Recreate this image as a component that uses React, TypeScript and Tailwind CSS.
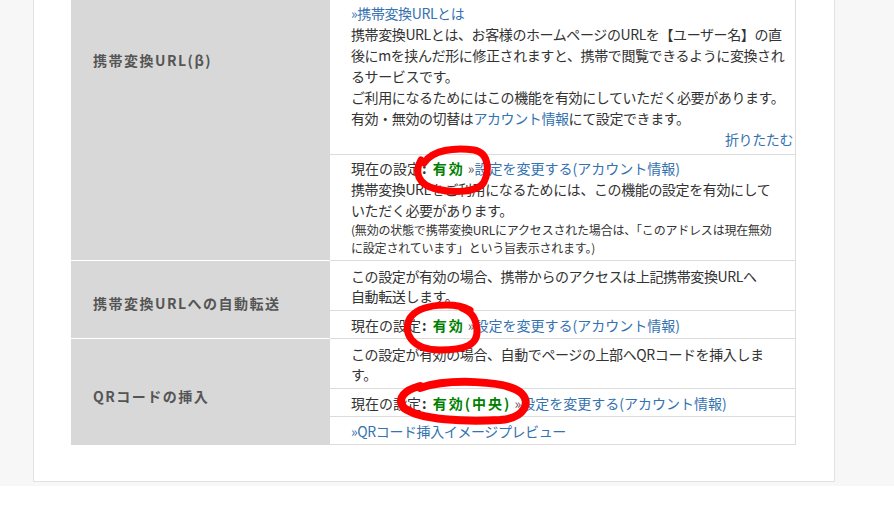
const link = 'text-[#3572b0]';

function Status({ value, lh }: { value: string; lh: string }) {
  return (
    <div className={`${lh} tracking-normal`}>
      現在の設定<b className="pl-[1px] font-bold">:</b>{' '}
      <b className="ml-[3px] font-bold tracking-[2px] text-[#008000]">{value}</b>{' '}
      <span className="text-[#555]">»</span>
      <a className={link}>設定を変更する(アカウント情報)</a>
    </div>
  );
}

function Header({ label, className }: { label: string; className: string }) {
  return (
    <div
      className={`w-[259px] shrink-0 bg-[#d8d8d8] pl-[22px] text-[14px] font-bold leading-[21px] tracking-[1.5px] text-[#555] ${className}`}
    >
      {label}
    </div>
  );
}

const cell = 'border-b border-[#dcdcdc] pl-[21px] pr-[2px] whitespace-nowrap';

export default function App() {
  return (
    <div className="relative min-h-screen w-[894px] bg-white font-['Noto_Sans_CJK_JP',sans-serif] text-[14px] tracking-[-0.4px] text-[#333]">
      <div className="bg-[#f7f7f7] pb-[4px] pl-[33px]">
        <div className="w-[802px] border border-t-0 border-[#e2e2e2] bg-white pb-[36px] pl-[37px] pr-[38px]">
          <div className="w-[725px]">
            {/* 携帯変換URL(β) */}
            <div className="flex">
              <Header label="携帯変換URL(β)" className="border-b border-white pt-[50px]" />
              <div className="flex-1 border-r border-[#dcdcdc]">
                <div className={`${cell} pb-[4px] pt-[3px] leading-[21px]`}>
                  <div>
                    <a className={link}>»携帯変換URLとは</a>
                  </div>
                  <div>携帯変換URLとは、お客様のホームページのURLを【ユーザー名】の直</div>
                  <div>後にmを挟んだ形に修正されますと、携帯で閲覧できるように変換され</div>
                  <div>るサービスです。</div>
                  <div>ご利用になるためにはこの機能を有効にしていただく必要があります。</div>
                  <div>
                    有効・無効の切替は<a className={link}>アカウント情報</a>にて設定できます。
                  </div>
                  <div className="text-right">
                    <a className={link}>折りたたむ</a>
                  </div>
                </div>
                <div className={`${cell} pb-[3px] pt-[3px]`}>
                  <Status value="有効" lh="leading-[21px]" />
                  <div className="leading-[21px]">
                    携帯変換URLをご利用になるためには、この機能の設定を有効にして
                  </div>
                  <div className="leading-[21px]">いただく必要があります。</div>
                  <div className="text-[12px] leading-[18px] tracking-[-0.2px]">
                    <div>(無効の状態で携帯変換URLにアクセスされた場合は、「このアドレスは現在無効</div>
                    <div>に設定されています」という旨表示されます。)</div>
                  </div>
                </div>
              </div>
            </div>

            {/* 携帯変換URLへの自動転送 */}
            <div className="flex">
              <Header label="携帯変換URLへの自動転送" className="flex items-center border-b border-white pt-[8px]" />
              <div className="flex-1 border-r border-[#dcdcdc] leading-[20px]">
                <div className={`${cell} pb-[4px] pt-[5px]`}>
                  <div>この設定が有効の場合、携帯からのアクセスは上記携帯変換URLへ</div>
                  <div>自動転送します。</div>
                </div>
                <div className={`${cell} pb-[3px] pt-[4px]`}>
                  <Status value="有効" lh="leading-[20px]" />
                </div>
              </div>
            </div>

            {/* QRコードの挿入 */}
            <div className="flex">
              <Header label="QRコードの挿入" className="flex items-center pt-[8px]" />
              <div className="flex-1 border-r border-[#dcdcdc] leading-[20px]">
                <div className={`${cell} pb-[4px] pt-[5px]`}>
                  <div>この設定が有効の場合、自動でページの上部へQRコードを挿入しま</div>
                  <div>す。</div>
                </div>
                <div className={`${cell} pb-[3px] pt-[4px]`}>
                  <Status value="有効(中央)" lh="leading-[20px]" />
                </div>
                <div className={`${cell} pb-[3px] pt-[4px]`}>
                  <a className={link}>»QRコード挿入イメージプレビュー</a>
                </div>
              </div>
            </div>
          </div>
        </div>
      </div>

      {/* red hand-drawn marks */}
      <svg
        className="pointer-events-none absolute left-0 top-0"
        width="894"
        height="505"
        viewBox="0 0 894 505"
        fill="none"
        stroke="#ff0000"
        strokeLinecap="round"
        strokeLinejoin="round"
      >
        <path
          strokeWidth="7"
          d="M424 163 C432 150 455 147 474 150 C490 153 489 172 484 182 C478 193 452 193 436 189 C418 185 414 172 421 160"
        />
        <path
          strokeWidth="7"
          d="M470 310 C455 302 420 303 410 318 C402 333 412 350 440 350 C465 350 478 345 477 330 C476 318 472 312 462 308"
        />
        <path
          strokeWidth="8"
          d="M420 388 C450 378 505 381 520 392 C532 402 525 418 500 420 C465 422 420 420 404 408 C396 398 405 390 420 386"
        />
      </svg>
    </div>
  );
}
